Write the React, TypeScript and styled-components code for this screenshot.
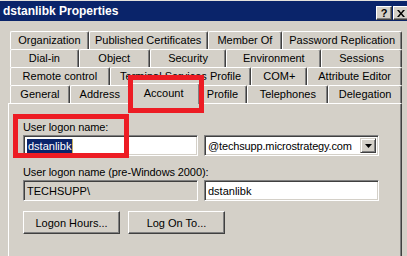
import { createGlobalStyle } from "styled-components";
import styled from "styled-components";

const GlobalStyle = createGlobalStyle`
  html, body {
    margin: 0;
    padding: 0;
    background: #d4d0c8;
  }
  body {
    font-family: "Liberation Sans", Arial, sans-serif;
    font-size: 11px;
    color: #000;
  }
`;

interface ITab {
  label: string;
  w: number;
  active?: boolean;
}

const tabRows: ITab[][] = [
  [
    { label: "Organization", w: 79 },
    { label: "Published Certificates", w: 119 },
    { label: "Member Of", w: 75 },
    { label: "Password Replication", w: 120 },
  ],
  [
    { label: "Dial-in", w: 69 },
    { label: "Object", w: 71 },
    { label: "Security", w: 77 },
    { label: "Environment", w: 95 },
    { label: "Sessions", w: 81 },
  ],
  [
    { label: "Remote control", w: 100 },
    { label: "Terminal Services Profile", w: 142 },
    { label: "COM+", w: 56 },
    { label: "Attribute Editor", w: 95 },
  ],
  [
    { label: "General", w: 60 },
    { label: "Address", w: 60 },
    { label: "Account", w: 68, active: true },
    { label: "Profile", w: 50 },
    { label: "Telephones", w: 81 },
    { label: "Delegation", w: 74 },
  ],
];

function App() {
  return (
    <>
      <GlobalStyle />
      <Window>
        <TitleBar>
          <Title>dstanlibk Properties</Title>
          <CaptionButtons>
            <CaptionButton>?</CaptionButton>
            <CaptionButton>
              <svg width="8" height="7" viewBox="0 0 8 7">
                <path
                  d="M0 0h2l2 2.5L6 0h2L5 3.5 8 7H6L4 4.5 2 7H0l3-3.5z"
                  fill="#000"
                />
              </svg>
            </CaptionButton>
          </CaptionButtons>
        </TitleBar>
        <Body>
          <TabStack>
            {tabRows.map((row, i) => (
              <TabRow key={i}>
                {row.map((tab) => (
                  <Tab key={tab.label} $w={tab.w} $active={tab.active}>
                    {tab.label}
                  </Tab>
                ))}
              </TabRow>
            ))}
          </TabStack>
          <Panel>
            <FieldLabel>User logon name:</FieldLabel>
            <FieldRow>
              <TextBox>
                <Selected>dstanlibk</Selected>
                <Caret />
              </TextBox>
              <Combo>
                <ComboText>@techsupp.microstrategy.com</ComboText>
                <ComboArrow>
                  <svg width="7" height="4" viewBox="0 0 7 4">
                    <path d="M0 0h7L3.5 4z" fill="#000" />
                  </svg>
                </ComboArrow>
              </Combo>
            </FieldRow>
            <FieldLabel>User logon name (pre-Windows 2000):</FieldLabel>
            <FieldRow>
              <TextBox $disabled>TECHSUPP\</TextBox>
              <TextBox>dstanlibk</TextBox>
            </FieldRow>
            <ButtonRow>
              <PushButton>Logon Hours...</PushButton>
              <PushButton>Log On To...</PushButton>
            </ButtonRow>
          </Panel>
        </Body>
        <Callout $x={128} $y={74} $w={76} $h={38} />
        <Callout $x={13} $y={113} $w={116} $h={44} />
      </Window>
    </>
  );
}

const Window = styled.div`
  position: relative;
  width: 407px;
  height: 256px;
  overflow: hidden;
  background: #d4d0c8;
  border-top: 1px solid #e4e2dc;
  box-sizing: border-box;
`;

const TitleBar = styled.div`
  height: 20px;
  background: #0a246a;
  display: flex;
  align-items: center;
  justify-content: space-between;
  padding: 0 0 0 3px;
`;

const Title = styled.div`
  color: #fff;
  font-weight: bold;
  font-size: 12px;
`;

const CaptionButtons = styled.div`
  display: flex;
  gap: 1px;
  margin-top: 4px;
  margin-right: -2px;
`;

const CaptionButton = styled.div`
  width: 16px;
  height: 14px;
  box-sizing: border-box;
  background: #d4d0c8;
  border-top: 1px solid #fff;
  border-left: 1px solid #fff;
  border-right: 1px solid #404040;
  border-bottom: 1px solid #404040;
  box-shadow: inset -1px -1px #808080;
  display: flex;
  align-items: center;
  justify-content: center;
  font-weight: bold;
  font-size: 11px;
  line-height: 1;
`;

const Body = styled.div`
  padding: 10px 5px 0 8px;
`;

const TabStack = styled.div`
  display: flex;
  flex-direction: column;
  padding-left: 2px;
`;

const TabRow = styled.div`
  display: flex;
  align-items: flex-end;
  height: 18px;
`;

const Tab = styled.div<{ $w: number; $active?: boolean }>`
  position: relative;
  width: ${(p) => (p.$active ? p.$w + 4 : p.$w)}px;
  height: ${(p) => (p.$active ? 21 : 18)}px;
  margin: ${(p) => (p.$active ? "0 -2px -1px -2px" : "0")};
  z-index: ${(p) => (p.$active ? 2 : 0)};
  box-sizing: border-box;
  background: #d4d0c8;
  border-top: 1px solid #fff;
  border-left: 1px solid #fff;
  border-right: 1px solid #404040;
  box-shadow: inset -1px 0 #808080;
  border-radius: 2px 2px 0 0;
  display: flex;
  justify-content: center;
  padding-top: ${(p) => (p.$active ? 3 : 2)}px;
  line-height: 13px;
  white-space: nowrap;
`;

const Panel = styled.div`
  position: relative;
  z-index: 1;
  height: 160px;
  box-sizing: border-box;
  border-top: 1px solid #fff;
  border-left: 1px solid #fff;
  border-right: 1px solid #404040;
  box-shadow: inset -1px 0 #808080;
  padding: 17px 0 0 14px;
`;

const FieldLabel = styled.div`
  line-height: 13px;
  height: 13px;
  margin-bottom: 1px;
  letter-spacing: -0.1px;
`;

const FieldRow = styled.div`
  display: grid;
  grid-template-columns: 175px 175px;
  gap: 6px;
  margin-bottom: 10px;
`;

const TextBox = styled.div<{ $disabled?: boolean }>`
  height: 21px;
  box-sizing: border-box;
  background: ${(p) => (p.$disabled ? "#d4d0c8" : "#fff")};
  border-top: 1px solid #808080;
  border-left: 1px solid #808080;
  border-right: 1px solid #fff;
  border-bottom: 1px solid #fff;
  box-shadow: inset 1px 1px #404040, inset -1px -1px #d4d0c8;
  padding: 3px 3px 0 3px;
  line-height: 14px;
  display: flex;
  align-items: flex-start;
`;

const Selected = styled.span`
  background: #0a246a;
  color: #fff;
  padding: 0 1px;
`;

const Caret = styled.span`
  width: 1px;
  height: 14px;
  background: #c8b060;
`;

const Combo = styled(TextBox)`
  padding: 2px 2px 2px 3px;
  justify-content: space-between;
  align-items: stretch;
`;

const ComboText = styled.span`
  padding-top: 1px;
  letter-spacing: -0.15px;
`;

const ComboArrow = styled.div`
  width: 16px;
  box-sizing: border-box;
  background: #d4d0c8;
  border-top: 1px solid #d4d0c8;
  border-left: 1px solid #d4d0c8;
  border-right: 1px solid #404040;
  border-bottom: 1px solid #404040;
  box-shadow: inset 1px 1px #fff, inset -1px -1px #808080;
  display: flex;
  align-items: center;
  justify-content: center;
`;

const ButtonRow = styled.div`
  display: flex;
  gap: 8px;
  margin-top: 2px;
`;

const PushButton = styled.div`
  width: 97px;
  height: 23px;
  box-sizing: border-box;
  background: #d4d0c8;
  border-top: 1px solid #fff;
  border-left: 1px solid #fff;
  border-right: 1px solid #404040;
  border-bottom: 1px solid #404040;
  box-shadow: inset -1px -1px #808080;
  display: flex;
  align-items: center;
  justify-content: center;
`;

const Callout = styled.div<{ $x: number; $y: number; $w: number; $h: number }>`
  position: absolute;
  left: ${(p) => p.$x}px;
  top: ${(p) => p.$y}px;
  width: ${(p) => p.$w}px;
  height: ${(p) => p.$h}px;
  box-sizing: border-box;
  border: 5px solid #ed1c24;
  z-index: 5;
`;

export default App;
